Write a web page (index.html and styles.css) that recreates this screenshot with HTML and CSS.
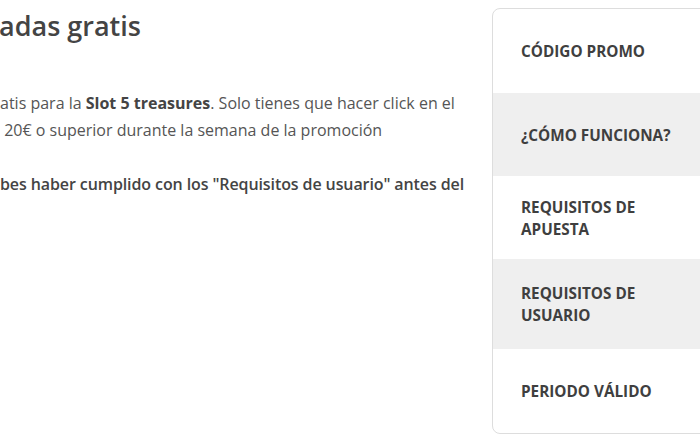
FILE: index.html
```html
<!DOCTYPE html>
<html lang="es">
<head>
  <meta charset="UTF-8" />
  <meta name="viewport" content="width=device-width, initial-scale=1" />
  <title>Tiradas gratis</title>
  <link rel="stylesheet" href="styles.css">
</head>
<body>
  <div class="page">
    <div class="content">
      <h1 class="title">adas gratis</h1>
      <p class="text">atis para la <strong>Slot 5 treasures</strong>. Solo tienes que hacer click en el<br>
        &nbsp;20€ o superior durante la semana de la promoción</p>
      <p class="text note"><strong>bes haber cumplido con los "Requisitos de usuario" antes del</strong></p>
    </div>

    <aside class="menu">
      <a class="menu-item" href="#codigo">Código promo</a>
      <a class="menu-item alt" href="#como">¿Cómo funciona?</a>
      <a class="menu-item" href="#apuesta">Requisitos de apuesta</a>
      <a class="menu-item alt tall" href="#usuario">Requisitos de usuario</a>
      <a class="menu-item" href="#periodo">Periodo válido</a>
    </aside>
  </div>
</body>
</html>
```

FILE: styles.css
```css
html, body {
  overflow: hidden;
}
body {
  font-family: 'Open Sans', Lato, sans-serif;
  background-color: #fff;
  color: #444;
  margin: 0;
}
.page {
  display: flex;
  align-items: flex-start;
  width: 762px;
  padding-top: 8px;
}
.content {
  flex: 1;
  padding-right: 20px;
}
.title {
  font-size: 27px;
  font-weight: 600;
  line-height: 36px;
  margin: 0 0 0 -1px;
  color: #444;
}
.text {
  font-size: 16px;
  line-height: 27px;
  color: #555;
  margin: 46px 0 0;
}
.text strong {
  font-weight: 700;
  color: #444;
}
.note {
  margin-top: 27px;
}
.note strong {
  font-weight: 600;
  letter-spacing: -0.1px;
}
.menu {
  flex: 0 0 268px;
  display: grid;
  grid-template-rows: 84px 83px 83px 90px 84px;
  border: 1px solid #ddd;
  border-radius: 8px;
  overflow: hidden;
}
.menu-item {
  display: flex;
  align-items: center;
  padding: 0 60px 0 28px;
  font-size: 15.3px;
  font-weight: 700;
  line-height: 22px;
  text-transform: uppercase;
  text-decoration: none;
  color: #3f3f3f;
}
.menu-item.alt {
  background-color: #efefef;
}
```
